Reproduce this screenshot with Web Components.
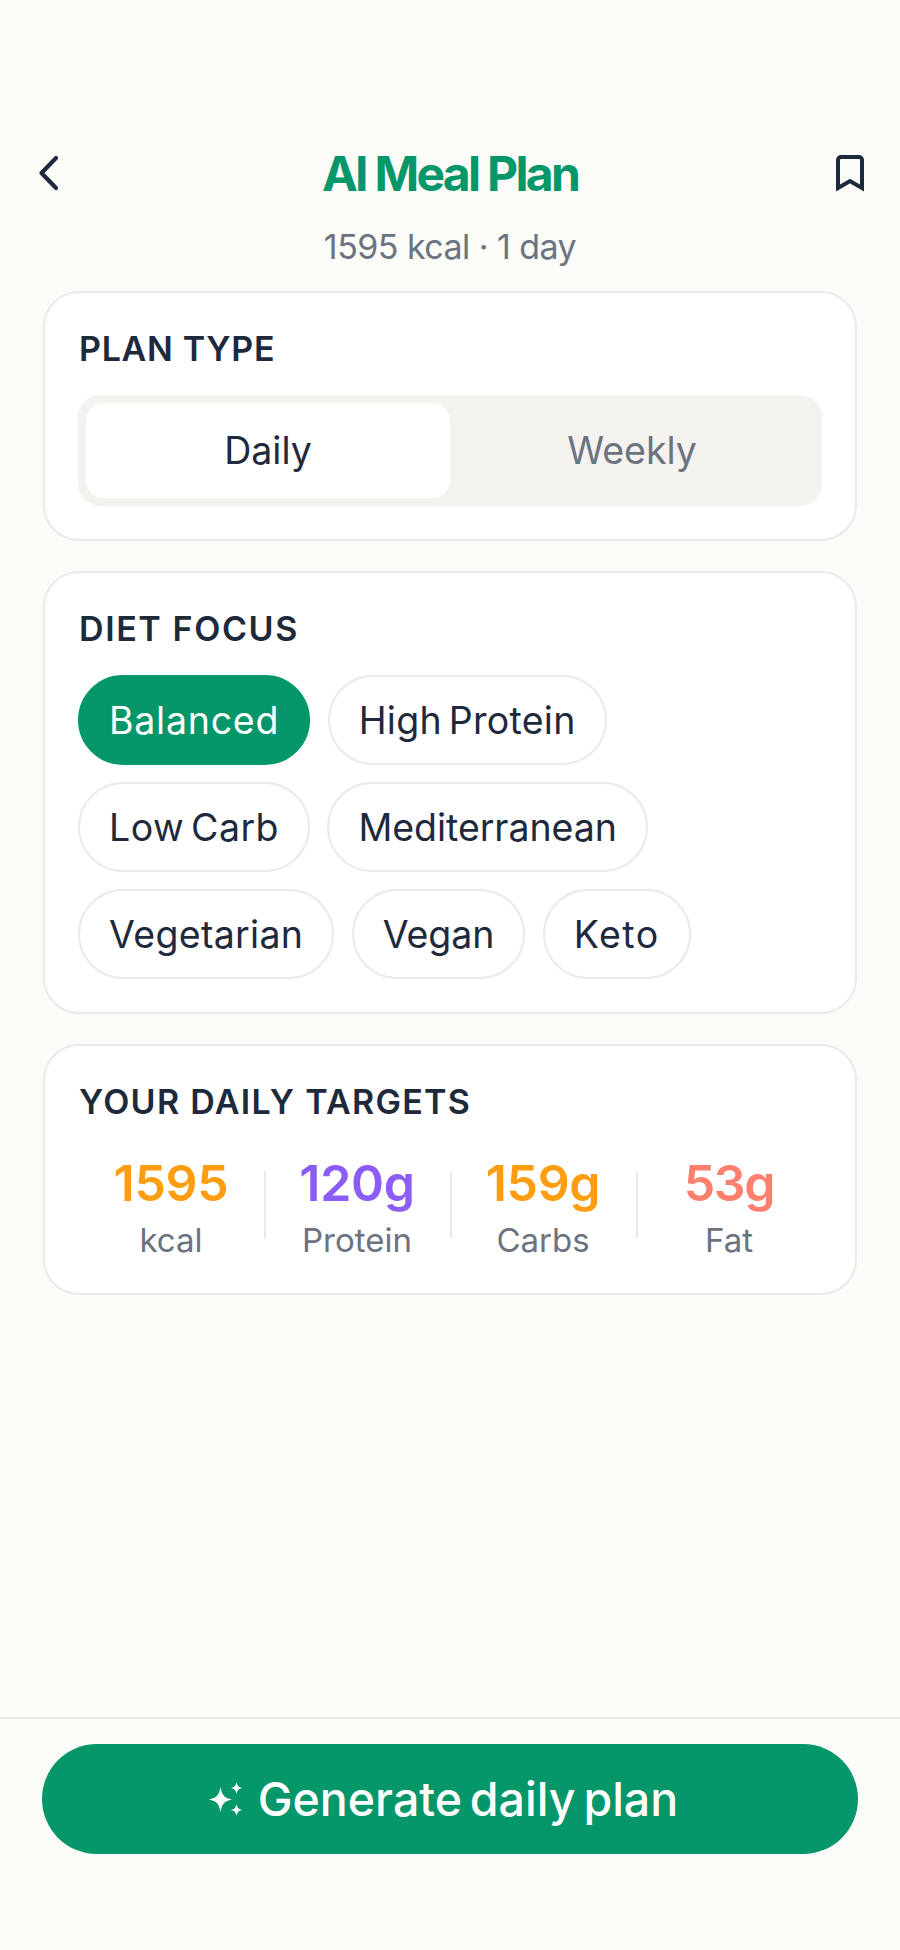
<!DOCTYPE html>
<html><head><meta charset="utf-8">
<style>
html,body{margin:0;padding:0;background:#fbfbf7}
body{font-family:Inter,"Noto Sans",sans-serif;color:#1e293b;width:900px;height:1950px;overflow:hidden}
</style></head><body>
<meal-app>
 <top-bar slot="head" title="AI Meal Plan" sub="1595 kcal · 1 day"></top-bar>
 <info-card label="PLAN TYPE" ls=".7"><seg-toggle a="Daily" b="Weekly"></seg-toggle></info-card>
 <info-card label="DIET FOCUS" ls="1.6"><chip-row>
   <diet-chip on style="letter-spacing:.75px">Balanced</diet-chip>
   <diet-chip style="letter-spacing:.28px;word-spacing:-4px">High Protein</diet-chip>
   <diet-chip style="letter-spacing:.45px;word-spacing:-4px">Low Carb</diet-chip>
   <diet-chip style="letter-spacing:-.05px">Mediterranean</diet-chip>
   <diet-chip style="letter-spacing:.3px">Vegetarian</diet-chip>
   <diet-chip style="letter-spacing:-.1px">Vegan</diet-chip>
   <diet-chip style="letter-spacing:1.5px">Keto</diet-chip>
 </chip-row></info-card>
 <info-card label="YOUR DAILY TARGETS" ls="1.3"><target-row>
   <target-stat value="1595" name="kcal" color="#fd9d0f"></target-stat>
   <target-stat value="120g" name="Protein" color="#8b5cf6" line></target-stat>
   <target-stat value="159g" name="Carbs" color="#fd9d0f" line></target-stat>
   <target-stat value="53g" name="Fat" color="#fd7f6e" line tight></target-stat>
 </target-row></info-card>
 <gen-footer slot="foot">Generate daily plan</gen-footer>
</meal-app>
<script>
function def(name,css,html){
  customElements.define(name,class extends HTMLElement{
    connectedCallback(){
      if(this.shadowRoot)return;
      const r=this.attachShadow({mode:'open'});
      r.innerHTML='<style>'+css+'</style>'+(typeof html==='function'?html(this):html);
    }
  });
}
def('meal-app',`:host{display:flex;flex-direction:column;height:1950px}
 main{flex:1;display:flex;flex-direction:column;gap:30px;padding:0 43px}`,
 `<slot name="head"></slot><main><slot></slot></main><slot name="foot"></slot>`);
def('top-bar',`:host{display:block;padding:148px 36px 24px}
 .r{display:flex;align-items:center;justify-content:space-between;height:52px}
 h1{margin:0;font-size:48px;font-weight:700;letter-spacing:-2.7px;color:#059669;line-height:52px}
 p{margin:27px 0 0;text-align:center;font-size:34px;line-height:40px;color:#6b7280;letter-spacing:-.55px}
 svg{display:block}`,
 h=>`<div class="r"><svg width="28" height="40" viewBox="0 0 28 40" fill="none"><path d="M20 4 L5.500 19 L20 34" stroke="#1e293b" stroke-width="4.200" stroke-linecap="round" stroke-linejoin="round"/></svg>
 <h1>${h.getAttribute('title')}</h1>
 <svg width="28" height="40" viewBox="0 0 28 40" fill="none"><path d="M2 34V6a3 3 0 0 1 3-3h18a3 3 0 0 1 3 3v28L14 27Z" stroke="#1e293b" stroke-width="4" stroke-linejoin="miter"/></svg></div>
 <p>${h.getAttribute('sub')}</p>`);
def('info-card',`:host{display:block;background:#fff;border:2px solid #e9e9ef;border-radius:36px;padding:36px 33px 33px}
 h2{margin:0 0 26px 1px;font-size:34px;line-height:40px;font-weight:600;color:#1e293b}`,
 h=>`<h2 style="letter-spacing:${h.getAttribute('ls')}px">${h.getAttribute('label')}</h2><slot></slot>`);
def('seg-toggle',`:host{display:flex;background:#f3f2ee;border-radius:22px;padding:8px}
 div{flex:1;height:95px;display:flex;align-items:center;justify-content:center;font-size:37.5px;color:#6b7280;border-radius:18px}
 .a{background:#fff;color:#1e293b}`,
 h=>`<div class="a">${h.getAttribute('a')}</div><div>${h.getAttribute('b')}</div>`);
def('chip-row',`:host{display:flex;flex-wrap:wrap;gap:17px 17.5px}`,`<slot></slot>`);
def('diet-chip',`:host{display:flex;align-items:center;height:90px;padding:0 29px;box-sizing:border-box;border:2px solid #e9e9ef;border-radius:45px;font-size:37.5px;color:#1e293b;background:#fff}
 :host([on]){background:#059669;border-color:#059669;color:#fff}`,`<slot></slot>`);
def('target-row',`:host{display:flex}`,`<slot></slot>`);
def('target-stat',`:host{flex:1;position:relative;display:block;text-align:center;padding-top:5px}
 b{display:block;font-size:50px;font-weight:600;line-height:60px;letter-spacing:-.3px}
 :host([tight]) b{letter-spacing:-1.4px}
 span{display:block;font-size:33px;line-height:40px;margin-top:7px;color:#6b7280}
 i{position:absolute;left:0;top:23px;width:2px;height:67px;background:#e9e9ef}`,
 h=>`${h.hasAttribute('line')?'<i></i>':''}<b style="color:${h.getAttribute('color')}">${h.getAttribute('value')}</b><span>${h.getAttribute('name')}</span>`);
def('gen-footer',`:host{display:block;border-top:2px solid #e9e9ef;padding:25px 42px 96px}
 button{all:unset;box-sizing:border-box;display:flex;align-items:center;justify-content:center;gap:15px;width:816px;height:110px;padding-right:13px;border-radius:55px;background:#059669;color:#fff;font-size:46.5px;font-weight:500;letter-spacing:0;word-spacing:-4.5px}
 svg{display:block}`,
 `<button><svg width="34" height="34" viewBox="0 0 34 34" fill="#fff"><path d="M11.500 5C13 13 15 15.800 23 17.500 15 19.200 13 22 11.500 30 10 22 8 19.200 0 17.500 8 15.800 10 13 11.500 5Z"/><path d="M27.500 0C28.300 3.800 29.300 5 33 6 29.300 7 28.300 8.200 27.500 12 26.700 8.200 25.700 7 22 6 25.700 5 26.700 3.800 27.500 0Z"/><path d="M27.500 22C28.300 25.800 29.300 27 33 28 29.300 29 28.300 30.200 27.500 34 26.700 30.200 25.700 29 22 28 25.700 27 26.700 25.800 27.500 22Z"/></svg><slot></slot></button>`);
</script>
</body></html>
